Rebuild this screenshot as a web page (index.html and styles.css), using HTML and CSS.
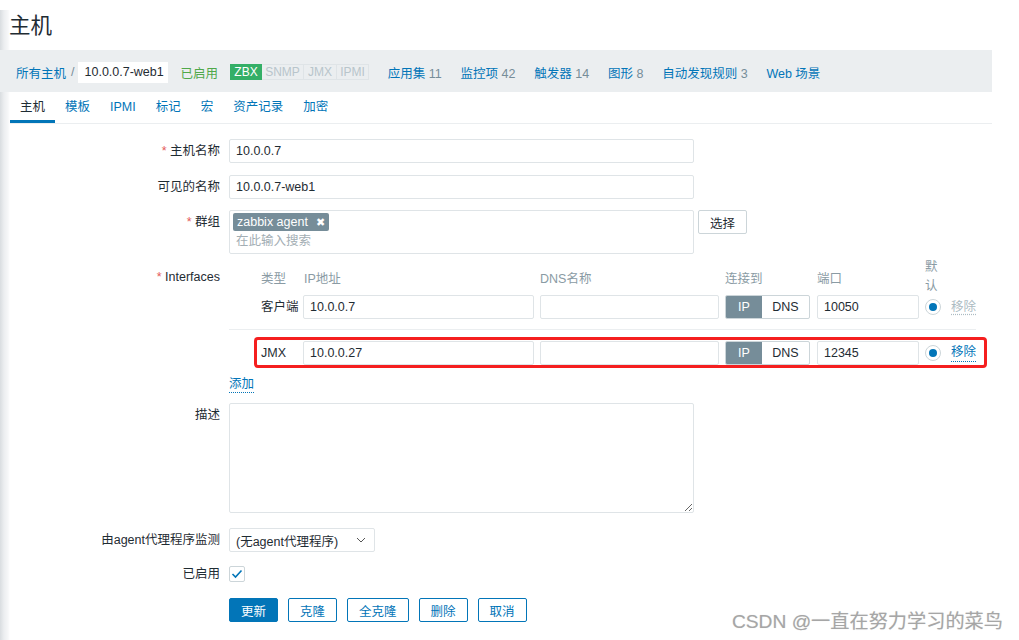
FILE: index.html
```html
<!DOCTYPE html>
<html lang="zh-CN">
<head>
<meta charset="utf-8">
<title>主机</title>
<link rel="stylesheet" href="styles.css">
</head>
<body>
<div class="page">
  <h1 class="title">主机</h1>

  <div class="hostnav">
    <a class="link">所有主机</a>
    <span class="sep">/</span>
    <span class="crumb">10.0.0.7-web1</span>
    <span class="status">已启用</span>
    <span class="avail"><span class="badge on">ZBX</span><span class="badge">SNMP</span><span class="badge">JMX</span><span class="badge">IPMI</span></span>
    <a class="link nav-item">应用集 <span class="count">11</span></a>
    <a class="link nav-item">监控项 <span class="count">42</span></a>
    <a class="link nav-item">触发器 <span class="count">14</span></a>
    <a class="link nav-item">图形 <span class="count">8</span></a>
    <a class="link nav-item">自动发现规则 <span class="count">3</span></a>
    <a class="link nav-item">Web 场景</a>
  </div>

  <div class="tabs">
    <span class="tab active">主机</span>
    <span class="tab">模板</span>
    <span class="tab">IPMI</span>
    <span class="tab">标记</span>
    <span class="tab">宏</span>
    <span class="tab">资产记录</span>
    <span class="tab">加密</span>
  </div>

  <div class="form">
    <div class="row r1">
      <div class="lbl"><span class="req">*</span> 主机名称</div>
      <div class="ctrl"><input class="input w-wide" value="10.0.0.7" readonly></div>
    </div>
    <div class="row r2">
      <div class="lbl">可见的名称</div>
      <div class="ctrl"><input class="input w-wide" value="10.0.0.7-web1" readonly></div>
    </div>
    <div class="row r3">
      <div class="lbl"><span class="req">*</span> 群组</div>
      <div class="ctrl ms-line">
        <div class="multiselect">
          <span class="tag">zabbix agent <span class="tag-x">✖</span></span>
          <div class="ms-placeholder">在此输入搜索</div>
        </div>
        <button class="btn-grey">选择</button>
      </div>
    </div>
    <div class="row r4">
      <div class="lbl"><span class="req">*</span> Interfaces</div>
      <div class="ctrl">
        <div class="ifaces">
          <div class="if-head">
            <span></span>
            <span>类型</span>
            <span class="h-ip">IP地址</span>
            <span>DNS名称</span>
            <span>连接到</span>
            <span>端口</span>
            <span class="h-def">默认</span>
            <span></span>
          </div>
          <div class="if-row first">
            <span></span>
            <span class="if-type">客户端</span>
            <input class="input w-ip" value="10.0.0.7" readonly>
            <input class="input w-dns" value="" readonly>
            <span class="toggle"><span class="tg on">IP</span><span class="tg">DNS</span></span>
            <input class="input w-port" value="10050" readonly>
            <span class="radio"><span class="dot"></span></span>
            <span class="remove disabled">移除</span>
          </div>
          <div class="if-row marked">
            <span></span>
            <span class="if-type">JMX</span>
            <input class="input w-ip" value="10.0.0.27" readonly>
            <input class="input w-dns" value="" readonly>
            <span class="toggle"><span class="tg on">IP</span><span class="tg">DNS</span></span>
            <input class="input w-port" value="12345" readonly>
            <span class="radio"><span class="dot"></span></span>
            <span class="remove">移除</span>
          </div>
          <div class="add-line"><span class="action">添加</span></div>
        </div>
      </div>
    </div>
    <div class="row r5">
      <div class="lbl">描述</div>
      <div class="ctrl"><textarea class="textarea"></textarea></div>
    </div>
    <div class="row r6">
      <div class="lbl">由agent代理程序监测</div>
      <div class="ctrl">
        <div class="select"><span>(无agent代理程序)</span>
          <svg class="chev" width="10" height="6" viewBox="0 0 10 6"><path d="M1 1 L5 5 L9 1" fill="none" stroke="#555" stroke-width="1"/></svg>
        </div>
      </div>
    </div>
    <div class="row r7">
      <div class="lbl">已启用</div>
      <div class="ctrl cb-line">
        <span class="checkbox"><svg width="12" height="10" viewBox="0 0 12 10"><path d="M1.5 5 L4.5 8 L10.5 1.5" fill="none" stroke="#0275b8" stroke-width="1.6"/></svg></span>
      </div>
    </div>
    <div class="row r8">
      <div class="lbl"></div>
      <div class="ctrl buttons">
        <button class="btn primary">更新</button>
        <button class="btn">克隆</button>
        <button class="btn">全克隆</button>
        <button class="btn">删除</button>
        <button class="btn">取消</button>
      </div>
    </div>
  </div>
</div>
<div class="watermark">CSDN @一直在努力学习的菜鸟</div>
</body>
</html>
```

FILE: styles.css
```css
* { box-sizing: border-box; }

html, body {
  margin: 0;
  padding: 0;
}

body {
  width: 1019px;
  height: 640px;
  overflow: hidden;
  position: relative;
  font-family: "Liberation Sans", "Noto Sans CJK SC", sans-serif;
  font-size: 12.5px;
  color: #1f2c33;
  background-color: #fff;
  background-image: linear-gradient(to right, #d9dde0 0, #eceef0 4px, #f6f7f8 8px, #ffffff 10px);
  background-repeat: no-repeat;
  background-size: 10px 630px;
  background-position: 0 10px;
}

.page {
  width: 992px;
}

.title {
  margin: 0;
  padding: 14px 0 0 9px;
  height: 50px;
  font-size: 21.5px;
  line-height: 24px;
  font-weight: normal;
  color: #1f2c33;
}

/* host navigation bar */
.hostnav {
  height: 42px;
  background: #ebeef0;
  display: flex;
  align-items: center;
  padding: 2px 0 0 16px;
  white-space: nowrap;
}

.link {
  color: #0275b8;
  text-decoration: none;
}

.sep {
  color: #768d99;
  margin: 0 3px 0 5px;
}

.crumb {
  background: #fff;
  height: 21px;
  line-height: 21px;
  padding: 0 7px;
  width: 90px;
  color: #1f2c33;
}

.status {
  color: #4fa84a;
  margin-left: 13px;
}

.avail {
  display: flex;
  margin-left: 12px;
}

.badge {
  height: 16px;
  line-height: 14px;
  padding: 0 3px;
  border: 1px solid #dfe4e7;
  border-left: none;
  color: #b8c5cb;
  font-size: 12px;
}

.badge:first-child {
  border-left: 1px solid #dfe4e7;
}

.badge.on {
  background: #34af67;
  border-color: #34af67;
  color: #fff;
  width: 32px;
  text-align: center;
}

.badge:nth-child(2) { width: 42px; text-align: center; }
.badge:nth-child(3) { width: 33px; text-align: center; }
.badge:nth-child(4) { width: 32px; text-align: center; }

.nav-item {
  margin-left: 18.8px;
}

.count {
  color: #768d99;
}

/* tabs */
.tabs {
  margin-left: 10px;
  display: flex;
  border-bottom: 1px solid #ebeef0;
}

.tab {
  height: 31px;
  line-height: 31px;
  padding: 0 10px;
  color: #0275b8;
  border-bottom: 3px solid transparent;
}

.tab.active {
  color: #1f2c33;
  border-bottom-color: #0275b8;
}

/* form */
.form {
  padding-top: 15px;
}

.row {
  display: grid;
  grid-template-columns: 220px 1fr;
  column-gap: 9px;
}

.r2 { margin-top: 12px; }
.r3 { margin-top: 11px; }
.r4 { margin-top: 11px; }
.r5 { margin-top: 8px; }
.r6 { margin-top: 15px; }
.r7 { margin-top: 10px; }
.r8 { margin-top: 12px; }

.lbl {
  text-align: right;
  line-height: 24px;
  white-space: nowrap;
}

.req {
  color: #e45959;
}

.input {
  display: block;
  height: 24px;
  border: 1px solid #dfe4e7;
  border-radius: 2px;
  padding: 0 6px;
  font: inherit;
  color: #1f2c33;
  background: #fff;
  outline: none;
}

.w-wide { width: 465px; }

.ms-line {
  display: flex;
  align-items: flex-start;
  gap: 4px;
}

.multiselect {
  width: 465px;
  height: 44px;
  border: 1px solid #dfe4e7;
  border-radius: 2px;
  padding: 2px 3px;
}

.tag {
  display: inline-block;
  height: 18px;
  line-height: 18px;
  background: #768d99;
  color: #fff;
  padding: 0 4px;
  border-radius: 2px;
  white-space: nowrap;
}

.tag-x {
  font-size: 11px;
  margin-left: 5px;
}

.ms-placeholder {
  color: #a3aeb4;
  line-height: 19px;
  padding-left: 3px;
  margin-top: 1px;
}

.btn-grey {
  height: 24px;
  width: 49px;
  padding: 0;
  border: 1px solid #ccd5d9;
  border-radius: 2px;
  background: #fff;
  font: inherit;
  color: #1f2c33;
}

/* interfaces */
.ifaces {
  width: 747px;
}

.if-head,
.if-row {
  display: grid;
  grid-template-columns: 32px 42px 237px 185px 92px 108px 26px 25px;
  align-items: center;
}

.if-head {
  height: 24px;
  grid-template-rows: 24px;
  color: #8a9ba4;
  white-space: nowrap;
}

.h-ip { padding-left: 1px; }

.h-def {
  white-space: normal;
  width: 14px;
  height: 24px;
  line-height: 19px;
  align-self: start;
  margin-top: -7px;
}

.if-row {
  height: 24px;
}

.if-row.first {
  margin-top: 6px;
  height: 35px;
  padding-bottom: 10px;
  border-bottom: 1px solid #ebeef0;
  box-sizing: border-box;
  align-items: start;
}

.if-row.first .if-type,
.if-row.first .remove { line-height: 24px; }
.if-row.first .radio { margin-top: 4px; }

.if-row.marked {
  margin-top: 11px;
  position: relative;
}

.if-row.marked::after {
  content: "";
  position: absolute;
  top: -4px;
  bottom: -3px;
  left: 25px;
  right: -11px;
  border: 3px solid #f51f1f;
  border-radius: 4px;
  pointer-events: none;
}

.if-type {
  white-space: nowrap;
}

.w-ip { width: 231px; }
.w-dns { width: 179px; }
.w-port { width: 102px; }

.toggle {
  display: flex;
  width: 85px;
  height: 24px;
  border: 1px solid #ccd5d9;
  border-radius: 2px;
  overflow: hidden;
}

.tg {
  line-height: 22px;
  text-align: center;
  color: #1f2c33;
  flex: 1;
}

.tg.on {
  flex: 0 0 36px;
  background: #768d99;
  color: #fff;
}

.radio {
  width: 16px;
  height: 16px;
  border: 1px solid #ccd5d9;
  border-radius: 50%;
  display: flex;
  align-items: center;
  justify-content: center;
  background: #fff;
}

.dot {
  width: 8px;
  height: 8px;
  border-radius: 50%;
  background: #0275b8;
}

.remove {
  color: #0275b8;
  border-bottom: 1px dotted #0275b8;
  line-height: 17px;
  justify-self: start;
  white-space: nowrap;
}

.remove.disabled {
  color: #acbbc2;
  border-bottom: none;
  text-decoration: underline dotted #acbbc2;
  text-underline-offset: 3px;
}

.add-line {
  margin-top: 8px;
  height: 22px;
  display: flex;
  align-items: center;
}

.action {
  color: #0275b8;
  line-height: 16px;
  border-bottom: 1px dotted #0275b8;
}

.textarea {
  display: block;
  width: 465px;
  height: 110px;
  border: 1px solid #dfe4e7;
  border-radius: 2px;
  font: inherit;
  resize: both;
  outline: none;
}

.select {
  width: 146px;
  height: 24px;
  border: 1px solid #dfe4e7;
  border-radius: 2px;
  display: flex;
  align-items: center;
  justify-content: space-between;
  padding: 0 8px 0 6px;
  white-space: nowrap;
}

.cb-line {
  height: 24px;
  display: flex;
  align-items: center;
}

.checkbox {
  width: 16px;
  height: 16px;
  border: 1px solid #ccd5d9;
  border-radius: 2px;
  display: flex;
  align-items: center;
  justify-content: center;
}

.buttons {
  display: flex;
  gap: 10px;
}

.btn {
  height: 24px;
  padding: 0 11px;
  border: 1px solid #0275b8;
  border-radius: 2px;
  background: #fff;
  color: #0275b8;
  font: inherit;
  white-space: nowrap;
}

.btn.primary {
  background: #0275b8;
  color: #fff;
}

.watermark {
  position: absolute;
  right: 16px;
  bottom: 6px;
  font-family: "Liberation Sans", "Noto Sans CJK SC", sans-serif;
  font-size: 19.2px;
  line-height: 24px;
  color: #a6a6a6;
  text-shadow: 0 0 1px #dadada;
  white-space: nowrap;
}
```
